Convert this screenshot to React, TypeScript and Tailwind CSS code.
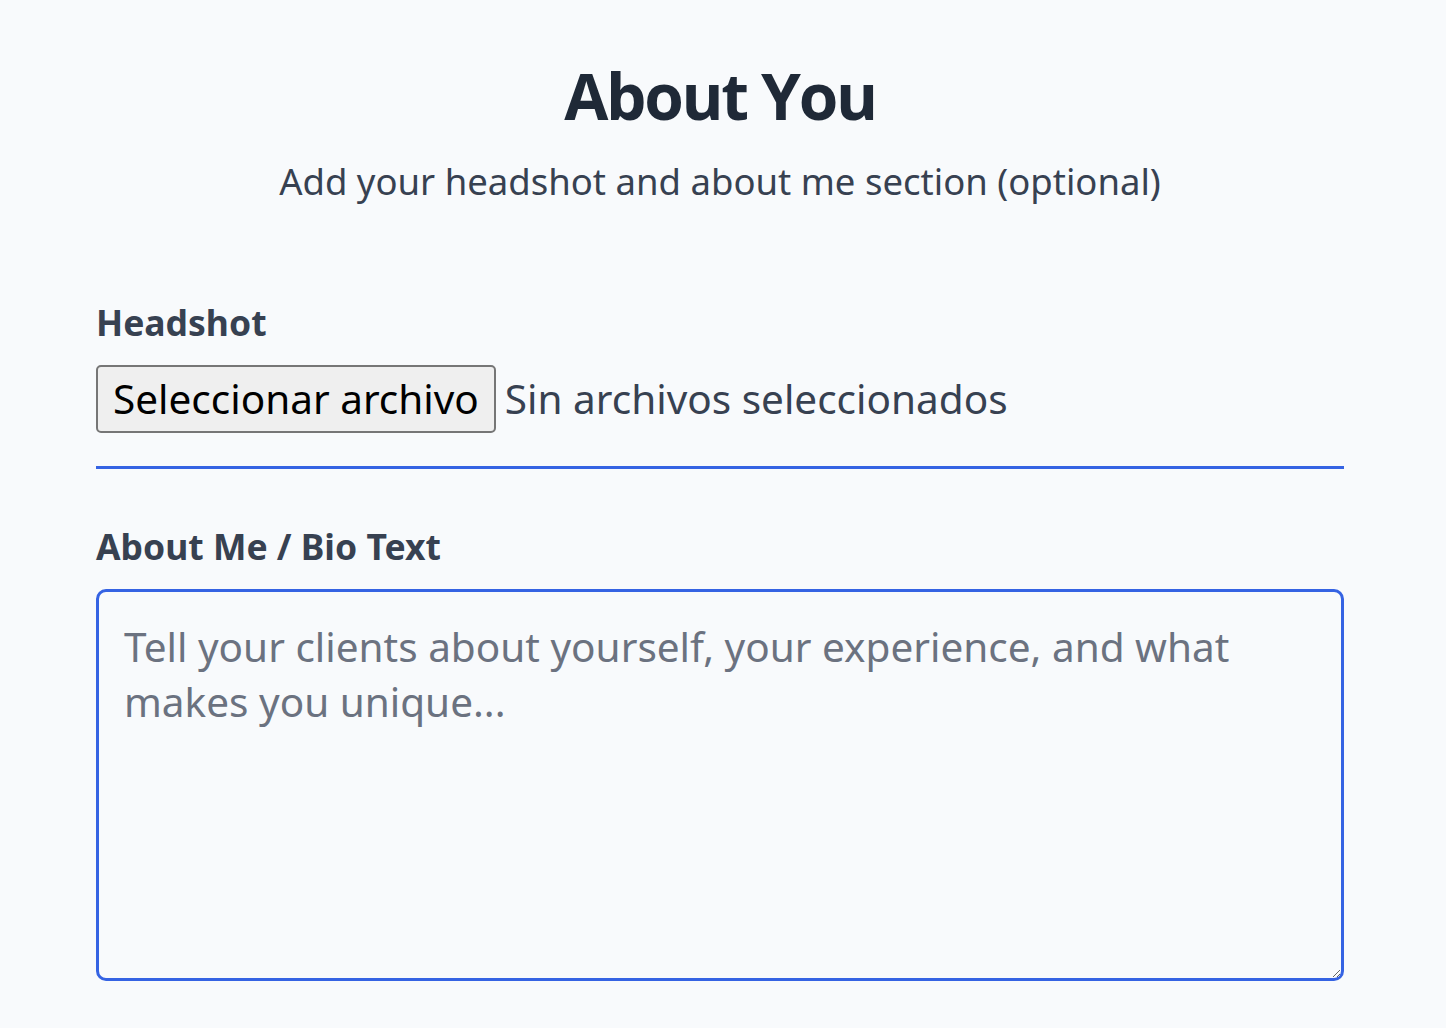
export default function App() {
  return (
    <div className="min-h-[1028px] bg-[#f8fafc] font-['Noto_Sans',sans-serif]">
      <div className="ml-[96px] w-[1248px] pt-[52px]">
        <div className="flex flex-col items-center">
          <h1 className="text-[64px] font-bold leading-[88px] tracking-[-2.3px] text-[#1f2937] font-['Open_Sans',sans-serif]">
            About You
          </h1>
          <p className="mt-[19px] text-[36.5px] leading-[44px] text-[#374151]">
            Add your headshot and about me section (optional)
          </p>
        </div>

        <div className="mt-[99px]">
          <label className="block text-[35.5px] font-bold leading-[40px] text-[#374151]">
            Headshot
          </label>
          <div className="mt-[23px] flex items-center gap-[9px] border-b-[3px] border-[#3563e3] pb-[33px]">
            <button
              type="button"
              className="h-[68px] rounded-[5px] border-2 border-[#767676] bg-[#efefef] px-[15px] text-[40.5px] leading-[50px] text-black"
            >
              Seleccionar archivo
            </button>
            <span className="text-[40.5px] leading-[50px] text-[#374151]">Sin archivos seleccionados</span>
          </div>
        </div>

        <div className="mt-[57px]">
          <label className="block text-[35.5px] font-bold leading-[40px] text-[#374151]">
            About Me / Bio Text
          </label>
          <textarea
            placeholder="Tell your clients about yourself, your experience, and what makes you unique..."
            className="mt-[23px] block h-[392px] w-full rounded-[10px] border-[3px] border-[#3563e3] bg-[#f8fafc] px-[25px] py-[27px] text-[40.5px] leading-[55px] text-[#1f2937] outline-none placeholder:text-[#6b7280]"
          />
        </div>
      </div>
    </div>
  );
}
